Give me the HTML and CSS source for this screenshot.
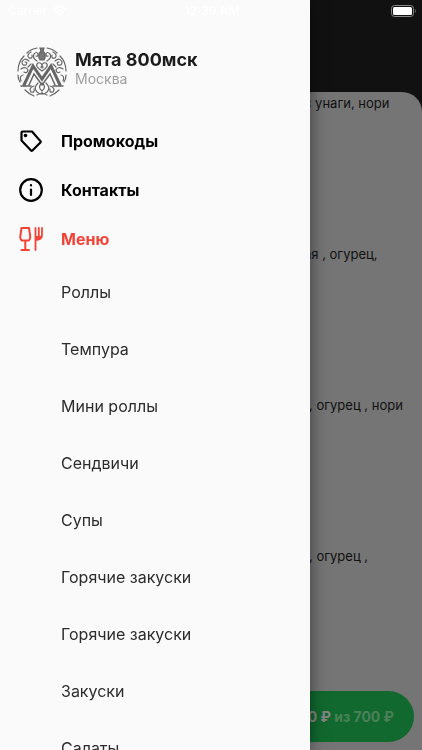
FILE: index.html
```html
<!DOCTYPE html>
<html lang="ru">
<head>
    <meta charset="UTF-8">
    <meta name="viewport" content="width=device-width, initial-scale=1.0">
    <title>Мята 800мск</title>
    <link rel="stylesheet" href="styles.css">
</head>
<body>
    <main class="page">
        <div class="sheet">
            <p class="dish">с унаги, нори</p>
            <p class="dish">ая , огурец,</p>
            <p class="dish short">, огурец , нори</p>
            <p class="dish short">, огурец ,</p>
        </div>
        <button type="button" class="cart"><span class="cart-sum">0 ₽</span> из 700 ₽</button>
    </main>

    <aside class="drawer">
        <header class="profile">
            <svg class="logo" viewBox="0 0 50 50" fill="none" stroke="#666" stroke-width="1.2" stroke-linecap="round">
                <!-- monogram -->
                <path d="M7 38L16 19l9 13 9-13 9 19" stroke-width="3"/>
                <path d="M12 38l5-11 8 11 8-11 5 11" stroke-width="1.5"/>
                <path d="M4 39h10M36 39h10" stroke-width="1.5"/>
                <!-- vase and heart -->
                <path d="M23 1h4l-1 3q4 4 1 9h-4q-3-5 1-9z" fill="#777"/>
                <path d="M25 24q-8-5-4-8 3-1 4 2 1-3 4-2 4 3-4 8z"/>
                <circle cx="25" cy="20" r="1"/>
                <path d="M20 14q-5-3-3-7 3-3 4 0 0 3-2 2M30 14q5-3 3-7-3-3-4 0 0 3 2 2"/>
                <!-- rim -->
                <path d="M20 1Q14 2 10 6M30 1q6 1 10 5M7 9Q1 15 1 24M43 9q6 6 6 15M1 28q0 4 2 7M49 28q0 4-2 7M8 43q4 4 9 6M42 43q-4 4-9 6"/>
                <!-- side scrolls -->
                <path d="M14 5q-5 3-2 6 4 1 3-3M36 5q5 3 2 6-4 1-3-3"/>
                <path d="M12 14q-5-4-7 1 0 4 4 3 2-3-1-3M38 14q5-4 7 1 0 4-4 3-2-3 1-3"/>
                <path d="M4 22q5-3 7 1-1 4-4 2M46 22q-5-3-7 1 1 4 4 2"/>
                <path d="M4 34q-2-5 2-6M46 34q2-5-2-6M14 17l-3 3M36 17l3 3"/>
                <!-- bottom ornament -->
                <path d="M25 36q-5 4 0 8 5-4 0-8zM21 36q-5 5-1 9 5 4 5 0 0 4 5 0 4-4-1-9"/>
                <path d="M17 39q-6 2-3 6 4 1 3-3M33 39q6 2 3 6-4 1-3-3M20 48q5-3 10 0"/>
            </svg>
            <div>
                <h1 class="name">Мята 800мск</h1>
                <p class="city">Москва</p>
            </div>
        </header>
        <nav>
            <a href="#promo" class="link">
                <svg class="icon" viewBox="0 0 24 24" fill="none" stroke="currentColor" stroke-width="2.200" stroke-linejoin="round">
                    <path d="M2.500 3.500v8L12 21.500q.7.700 1.400 0l8-8q.7-.7 0-1.400L13 2.500H3.500q-1 0-1 1z"/>
                    <circle cx="6.500" cy="6.500" r="1.800" fill="currentColor" stroke="none"/>
                </svg>
                Промокоды
            </a>
            <a href="#contacts" class="link">
                <svg class="icon" viewBox="0 0 24 24" fill="none" stroke="currentColor" stroke-width="2.200" stroke-linecap="round">
                    <circle cx="12" cy="12" r="10.800"/>
                    <path d="M12 11.500v5.500M12 7.200v.2"/>
                </svg>
                Контакты
            </a>
            <a href="#menu" class="link active">
                <svg class="icon" viewBox="0 0 24 24" fill="none" stroke="currentColor" stroke-width="2" stroke-linecap="round" stroke-linejoin="round">
                    <path d="M2.500 1h7.500l1.300 9q0 2-1.500 3.500H2.700Q1.200 12 1.200 10zM6.300 13.500V23M2.500 23h7.500"/>
                    <path d="M16.500 1v22M19.800 1v8M23 1v7q0 4-4 4.500" stroke-width="1.800"/>
                    <path d="M17 9h6q0 4-6 5z" fill="currentColor" stroke="none"/>
                </svg>
                Меню
            </a>
            <ul class="categories">
                <li><a href="#rolls">Роллы</a></li>
                <li><a href="#tempura">Темпура</a></li>
                <li><a href="#mini">Мини роллы</a></li>
                <li><a href="#sandwiches">Сендвичи</a></li>
                <li><a href="#soups">Супы</a></li>
                <li><a href="#hot">Горячие закуски</a></li>
                <li><a href="#hot2">Горячие закуски</a></li>
                <li><a href="#snacks">Закуски</a></li>
                <li><a href="#salads">Салаты</a></li>
            </ul>
        </nav>
    </aside>

    <div class="status">
        <span class="carrier">Carrier
            <svg class="wifi" viewBox="0 0 16 12" fill="none" stroke="currentColor" stroke-width="2">
                <path d="M1 4.500q7-6 14 0M3.500 7.500q4.500-4 9 0"/>
                <path d="M8 12L5.500 9.500q2.500-2 5 0z" fill="currentColor" stroke="none"/>
            </svg>
        </span>
        <span>12:39 AM</span>
        <svg class="battery" viewBox="0 0 25 12">
            <rect x="0.500" y="0.500" width="22" height="11" rx="3" fill="none" stroke="#888"/>
            <rect x="2" y="2" width="19" height="8" rx="1.500" fill="#fff"/>
            <path d="M24 4q1.500 2 0 4z" fill="#888"/>
        </svg>
    </div>
</body>
</html>
```

FILE: styles.css
```css
* {
    margin: 0;
    padding: 0;
    box-sizing: border-box;
    font-family: Inter, 'Liberation Sans', sans-serif;
}

body {
    height: 100vh;
    overflow: hidden;
    background: #111;
}

a {
    color: inherit;
    text-decoration: none;
}

.page {
    height: 100vh;
    padding-top: 92px;
}

.sheet {
    height: 100%;
    padding-left: 304px;
    background: #757575;
    border-top-right-radius: 20px;
    overflow: hidden;
}

.dish {
    height: 151px;
    padding-top: 3px;
    font-size: 13px;
    line-height: 16px;
    color: #111;
    white-space: nowrap;
}

.dish.short {
    padding-left: 5px;
}

.cart {
    position: fixed;
    left: 8px;
    right: 8px;
    bottom: 8px;
    height: 51px;
    padding-right: 20px;
    border: none;
    border-radius: 26px;
    background: #11692f;
    color: #4b8159;
    font-size: 14px;
    font-weight: 700;
    text-align: right;
}

.cart-sum {
    color: #858585;
}

.drawer {
    position: fixed;
    top: 0;
    bottom: 0;
    left: 0;
    width: 310px;
    padding-top: 47px;
    background: #fafafa;
    box-shadow: 0 0 16px rgba(0, 0, 0, 0.5);
    overflow: hidden;
}

.profile {
    display: flex;
    gap: 8px;
    height: 69px;
    padding-left: 17px;
}

.logo {
    width: 50px;
    height: 50px;
}

.name {
    padding-top: 2px;
    font-size: 18px;
    line-height: 22px;
    font-weight: 700;
    color: #1c1c1c;
}

.city {
    font-size: 14px;
    line-height: 16px;
    color: #9e9e9e;
}

.link {
    display: flex;
    align-items: center;
    gap: 18px;
    height: 49px;
    padding-left: 19px;
    font-size: 16px;
    font-weight: 700;
    color: #000;
}

.link.active {
    color: #f44336;
}

.icon {
    width: 24px;
    height: 24px;
    overflow: visible;
}

.categories {
    list-style: none;
}

.categories a {
    display: flex;
    align-items: center;
    height: 57px;
    padding-left: 61px;
    font-size: 16px;
    color: #2c2c2c;
}

.status {
    position: fixed;
    top: 0;
    left: 0;
    right: 0;
    display: grid;
    grid-template-columns: 1fr auto 1fr;
    align-items: center;
    height: 21px;
    padding: 0 6px 0 8px;
    font-size: 12px;
    font-weight: 600;
    color: #fff;
}

.carrier {
    display: flex;
    align-items: center;
    gap: 5px;
    font-weight: 400;
}

.wifi {
    width: 15px;
    height: 12px;
}

.battery {
    justify-self: end;
    width: 25px;
    height: 12px;
}
```
